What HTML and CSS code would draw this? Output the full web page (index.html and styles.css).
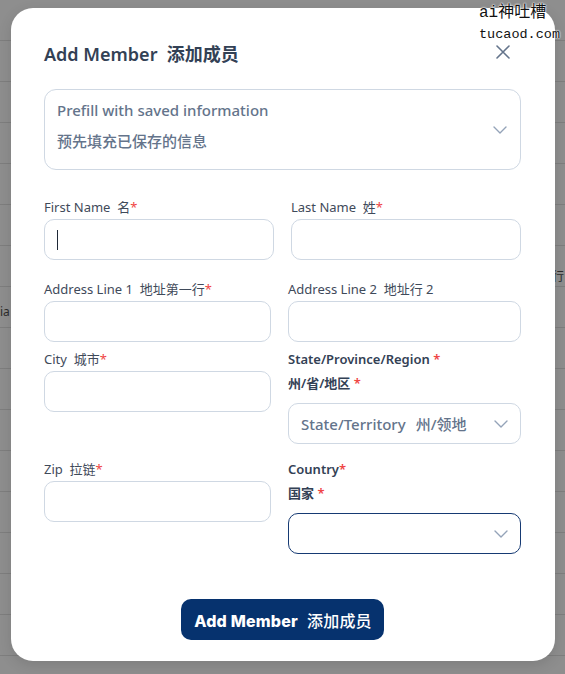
FILE: index.html
```html
<!DOCTYPE html>
<html lang="zh-CN">
<head>
    <meta charset="UTF-8">
    <meta name="viewport" content="width=device-width, initial-scale=1.0">
    <title>Add Member</title>
    <link rel="stylesheet" href="styles.css">
</head>
<body>
    <div class="backdrop">
        <span class="bg-word bg-left">ia</span>
        <span class="bg-word bg-right">行</span>
    </div>

    <div class="brand-mark">
        <div class="brand-top">ai神吐槽</div>
        <div>tucaod.com</div>
    </div>

    <div class="modal">
        <div class="modal-head">
            <h2>Add Member&nbsp;&nbsp;添加成员</h2>
            <button class="close-btn" type="button" aria-label="Close">
                <svg width="16" height="16" viewBox="0 0 16 16"><path d="M2 2 L14 14 M14 2 L2 14" stroke="#64748b" stroke-width="1.6" stroke-linecap="round"/></svg>
            </button>
        </div>

        <div class="prefill">
            <div>
                <div class="prefill-en">Prefill with saved information</div>
                <div class="prefill-zh">预先填充已保存的信息</div>
            </div>
            <svg class="chev" width="14" height="8" viewBox="0 0 14 8"><path d="M1 1 L7 7 L13 1" fill="none" stroke="#94a3b8" stroke-width="1.4" stroke-linecap="round" stroke-linejoin="round"/></svg>
        </div>

        <form class="member-form" onsubmit="return false">
            <div class="row row-names">
                <div class="field">
                    <label>First Name&nbsp;&nbsp;名<span class="req">*</span></label>
                    <div class="input-wrap">
                        <input type="text">
                        <span class="caret"></span>
                    </div>
                </div>
                <div class="field">
                    <label>Last Name&nbsp;&nbsp;姓<span class="req">*</span></label>
                    <input type="text">
                </div>
            </div>

            <div class="row row-address">
                <div class="field">
                    <label>Address Line 1&nbsp;&nbsp;地址第一行<span class="req">*</span></label>
                    <input type="text">
                </div>
                <div class="field">
                    <label>Address Line 2&nbsp;&nbsp;地址行 2</label>
                    <input type="text">
                </div>
            </div>

            <div class="row row-city">
                <div class="field">
                    <label>City&nbsp;&nbsp;城市<span class="req">*</span></label>
                    <input type="text">
                </div>
                <div class="field">
                    <label class="strong">State/Province/Region<span class="req"> *</span></label>
                    <label class="strong">州/省/地区 <span class="req">*</span></label>
                    <div class="select gap">
                        <span class="placeholder">State/Territory<span class="zh">州/领地</span></span>
                        <svg class="chev" width="14" height="8" viewBox="0 0 14 8"><path d="M1 1 L7 7 L13 1" fill="none" stroke="#94a3b8" stroke-width="1.4" stroke-linecap="round" stroke-linejoin="round"/></svg>
                    </div>
                </div>
            </div>

            <div class="row row-zip">
                <div class="field">
                    <label>Zip&nbsp;&nbsp;拉链<span class="req">*</span></label>
                    <input type="text">
                </div>
                <div class="field">
                    <label class="strong">Country<span class="req">*</span></label>
                    <label class="strong">国家 <span class="req">*</span></label>
                    <div class="select gap active">
                        <span class="placeholder"></span>
                        <svg class="chev" width="14" height="8" viewBox="0 0 14 8"><path d="M1 1 L7 7 L13 1" fill="none" stroke="#94a3b8" stroke-width="1.4" stroke-linecap="round" stroke-linejoin="round"/></svg>
                    </div>
                </div>
            </div>

            <div class="actions">
                <button type="submit" class="submit-btn">Add Member<span class="zh">添加成员</span></button>
            </div>
        </form>
    </div>
</body>
</html>
```

FILE: styles.css
```css
body {
    margin: 0;
    width: 565px;
    height: 674px;
    overflow: hidden;
    font-family: "Noto Sans", "Noto Sans CJK SC", sans-serif;
    color: #334155;
    background: #8e8e8e;
    position: relative;
}

/* page behind the dimmed overlay */
.backdrop {
    position: absolute;
    inset: 0;
    background: repeating-linear-gradient(
        to bottom,
        transparent 0,
        transparent 40px,
        #7e7e7e 40px,
        #7e7e7e 41px
    );
}
.bg-word {
    position: absolute;
    font-size: 12px;
    color: #2c2c2c;
}
.bg-left { left: 0; top: 303px; }
.bg-right { left: 552px; top: 267px; }

.brand-mark {
    position: absolute;
    top: 2px;
    left: 479px;
    z-index: 5;
    font-family: "Liberation Mono", "Noto Sans CJK SC", monospace;
    font-size: 13.5px;
    line-height: 20px;
    color: #111;
    text-shadow: 0 0 2px #fff, 0 0 2px #fff, 0 0 1px #fff;
}
.brand-top {
    font-size: 16px;
    line-height: 23px;
}

.modal {
    position: absolute;
    top: 8px;
    left: 11px;
    width: 544px;
    height: 653px;
    box-sizing: border-box;
    padding: 0 34px 0 33px;
    background: #fff;
    border-radius: 22px;
    box-shadow: 0 4px 14px rgba(0,0,0,0.12);
}

.modal-head {
    display: flex;
    align-items: center;
    justify-content: space-between;
    height: 28px;
    margin-top: 31px;
}
.modal-head h2 {
    margin: 0;
    font-size: 18px;
    font-weight: 600;
    color: #334155;
}
.close-btn {
    border: 0;
    background: none;
    padding: 0;
    margin-right: 10px;
    margin-top: -2px;
    display: flex;
}

.prefill {
    margin-top: 22px;
    height: 81px;
    box-sizing: border-box;
    border: 1px solid #cfd8e3;
    border-radius: 12px;
    padding: 9px 13px 0 12px;
    display: flex;
    align-items: center;
    justify-content: space-between;
}
.prefill > div { align-self: flex-start; }
.prefill-en {
    font-size: 15px;
    font-weight: 500;
    line-height: 22px;
    color: #64748b;
}
.prefill-zh {
    font-size: 15px;
    font-weight: 500;
    line-height: 22px;
    margin-top: 9px;
    color: #64748b;
}
.prefill .chev { margin-top: -9px; }

.row {
    display: grid;
    column-gap: 17px;
}
.row-names { grid-template-columns: 230px 230px; margin-top: 25px; }
.row-address { grid-template-columns: 227px 233px; margin-top: 17px; }
.row-city { grid-template-columns: 227px 233px; margin-top: 5px; }
.row-zip { grid-template-columns: 227px 233px; margin-top: 13px; }

.field {
    display: flex;
    flex-direction: column;
}
.field label {
    font-size: 13px;
    line-height: 24px;
    color: #3f4a5a;
}
.field label.strong {
    font-weight: 600;
    color: #334155;
}
.req { color: #ef4444; }

.field input,
.select {
    height: 41px;
    box-sizing: border-box;
    border: 1px solid #cfd8e3;
    border-radius: 10px;
    font: inherit;
    font-size: 15px;
    padding: 0 12px;
    outline: none;
    width: 100%;
    background: #fff;
}

.input-wrap { position: relative; }
.caret {
    position: absolute;
    left: 13px;
    top: 11px;
    width: 1px;
    height: 20px;
    background: #1f2937;
}

.select {
    display: flex;
    align-items: center;
    justify-content: space-between;
}
.select.gap { margin-top: 8px; }
.select.active { border-color: #163a73; }
.placeholder {
    font-size: 15px;
    font-weight: 500;
    color: #64748b;
}
.placeholder .zh { margin-left: 10px; }

.actions {
    display: flex;
    justify-content: center;
    margin-top: 45px;
}
.submit-btn {
    height: 41px;
    padding: 0 12px 0 13px;
    border: 0;
    border-radius: 10px;
    background: #06326e;
    color: #fff;
    font-family: "Inter", "Noto Sans CJK SC", sans-serif;
    font-size: 16px;
    font-weight: 800;
    letter-spacing: 0.2px;
}
.submit-btn .zh {
    margin-left: 9px;
    font-family: "Noto Sans CJK SC", sans-serif;
    font-weight: 500;
}
```
